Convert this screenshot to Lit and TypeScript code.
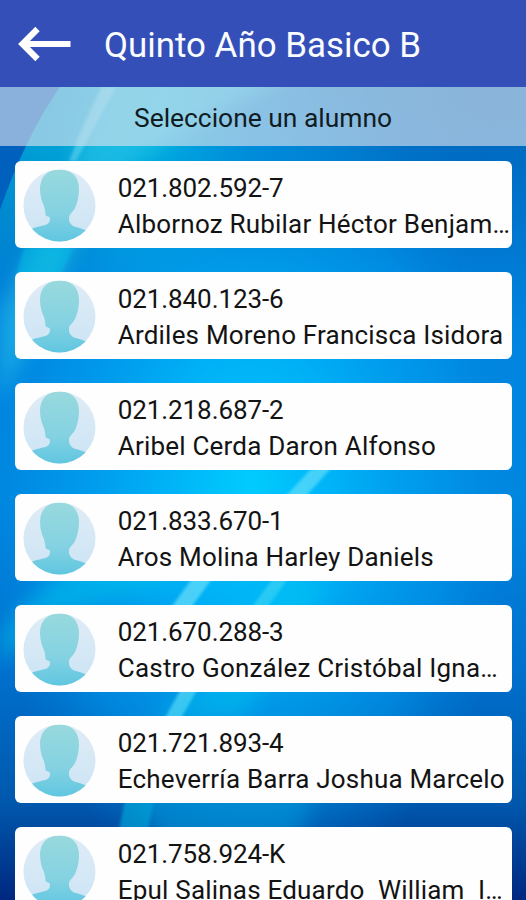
import { LitElement, html, css, svg } from "lit";
import { customElement, property } from "lit/decorators.js";

interface Student {
  id: string;
  name: string;
}

const STUDENTS: Student[] = [
  { id: "021.802.592-7", name: "Albornoz Rubilar Héctor Benjam…" },
  { id: "021.840.123-6", name: "Ardiles Moreno Francisca Isidora" },
  { id: "021.218.687-2", name: "Aribel Cerda Daron Alfonso" },
  { id: "021.833.670-1", name: "Aros Molina Harley Daniels" },
  { id: "021.670.288-3", name: "Castro González Cristóbal Igna…" },
  { id: "021.721.893-4", name: "Echeverría Barra Joshua Marcelo" },
  { id: "021.758.924-K", name: "Epul Salinas Eduardo  William  I…" },
];

@customElement("student-avatar")
export class StudentAvatar extends LitElement {
  static styles = css`
    :host { display: block; width: 73px; height: 73px; flex: none; }
    svg { display: block; width: 100%; height: 100%; }
  `;
  render() {
    return html`<svg viewBox="0 0 73 73" aria-hidden="true">
      <defs>
        <linearGradient id="back" x1="0" y1="0" x2="0" y2="1">
          <stop offset="0" stop-color="#e0ecf6" />
          <stop offset="1" stop-color="#cbe4f5" />
        </linearGradient>
        <linearGradient id="body" x1="0" y1="0" x2="0" y2="1">
          <stop offset="0" stop-color="#98d9dd" />
          <stop offset="0.6" stop-color="#84d2e2" />
          <stop offset="1" stop-color="#5fc6e0" />
        </linearGradient>
        <clipPath id="disc"><circle cx="36.5" cy="36.5" r="36" /></clipPath>
      </defs>
      <circle cx="36.5" cy="36.5" r="36" fill="url(#back)" />
      <path clip-path="url(#disc)" fill="url(#body)"
        d="M36.5 .5C49 .5 56 8 56 20C56 29 53.500 36 52 39C51 42 47 44 46 48C45.500 52 47 55 50 57C53 58.500 57 58.500 64 62V73H6V61C13 57.500 21 57 24.500 55C27 53.500 27.500 50 26.500 48C24.500 47.500 21.500 46.500 22.500 44.500C22 42 22 41 21 37C19 33 17 27 17 20C17 8 24 .5 36.500 .5Z" />
    </svg>`;
  }
}

@customElement("student-card")
export class StudentCard extends LitElement {
  @property({ attribute: false }) student!: Student;
  static styles = css`
    :host {
      display: flex;
      box-sizing: border-box;
      height: 87.4px;
      padding: 8.2px 0 0 7.8px;
      gap: 22px;
      background: #fefefe;
      border-radius: 6px;
      color: #131313;
      overflow: hidden;
    }
    .info { flex: 1; min-width: 0; padding-top: 1px; font-size: 26px; line-height: 36px; }
    .id, .name { white-space: pre; }
    .id { letter-spacing: -0.1px; }
    .name { letter-spacing: 0.2px; }
  `;
  render() {
    return html`<student-avatar></student-avatar>
      <div class="info">
        <div class="id">${this.student.id}</div>
        <div class="name">${this.student.name}</div>
      </div>`;
  }
}

const wallpaper = svg`
  <defs>
    <linearGradient id="base" x1="0" y1="87" x2="0" y2="900" gradientUnits="userSpaceOnUse">
      <stop offset="0" stop-color="#0067b8" />
      <stop offset="0.09" stop-color="#006cc4" />
      <stop offset="0.3" stop-color="#0084df" />
      <stop offset="0.5" stop-color="#0087e0" />
      <stop offset="0.72" stop-color="#0070cd" />
      <stop offset="0.88" stop-color="#0058ad" />
      <stop offset="1" stop-color="#002880" />
    </linearGradient>
    <radialGradient id="glow" cx="0" cy="0" r="1" gradientUnits="userSpaceOnUse" gradientTransform="translate(250 485) scale(270 410)">
      <stop offset="0" stop-color="#00ccff" />
      <stop offset="0.35" stop-color="#00b4f8" stop-opacity="0.9" />
      <stop offset="0.75" stop-color="#009bed" stop-opacity="0.55" />
      <stop offset="1" stop-color="#0088dd" stop-opacity="0" />
    </radialGradient>
    <linearGradient id="sweep" x1="20" y1="100" x2="480" y2="190" gradientUnits="userSpaceOnUse">
      <stop offset="0" stop-color="#009bd3" />
      <stop offset="0.3" stop-color="#00addf" />
      <stop offset="0.5" stop-color="#0090dc" stop-opacity="0.85" />
      <stop offset="1" stop-color="#0078cb" stop-opacity="0" />
    </linearGradient>
    <linearGradient id="fade" x1="0" y1="150" x2="0" y2="300" gradientUnits="userSpaceOnUse">
      <stop offset="0" stop-color="#fff" />
      <stop offset="1" stop-color="#000" />
    </linearGradient>
    <mask id="fadeMask"><rect width="526" height="900" fill="url(#fade)" /></mask>
    <clipPath id="rightOfCurve"><path d="M60 87Q26 135 0 210V900H526V87Z" /></clipPath>
    <filter id="soft" x="-20%" y="-20%" width="140%" height="140%"><feGaussianBlur stdDeviation="10" /></filter>
    <filter id="edge" x="-20%" y="-20%" width="140%" height="140%"><feGaussianBlur stdDeviation="1.500" /></filter>
  </defs>
  <rect width="526" height="900" fill="url(#base)" />
  <rect width="526" height="900" fill="url(#glow)" />
  <path d="M0 87H60Q26 135 0 210Z" fill="#0060be" />
  <path mask="url(#fadeMask)" d="M60 87Q26 135 0 210V420H526V87Z" fill="url(#sweep)" />
  <g clip-path="url(#rightOfCurve)">
    <path d="M0 310L60 200L110 60H320L150 150L85 215L58 290L0 400Z" fill="#30cdea" opacity="0.5" filter="url(#soft)" />
  </g>
  <path d="M24 248H73L60 276H16Z" fill="#00c4e6" opacity="0.45" filter="url(#edge)" />
  <path d="M102 87Q85 120 69 161H76L116 87Z" fill="#8be6f4" opacity="0.4" filter="url(#edge)" />
  <path d="M0 635Q45 570 130 540L230 490L160 590Q60 600 0 665Z" fill="#00c8ee" opacity="0.5" filter="url(#soft)" />
  <path d="M330 465L310 470L285 497H305L334 465Z" fill="#7ce7fb" opacity="0.55" filter="url(#edge)" />
  <path d="M194 576L170 609H190L214 576Z" fill="#7ce7fb" opacity="0.6" filter="url(#edge)" />
  <path d="M272 580L252 607L268 607L290 576Z" fill="#66dff4" opacity="0.5" filter="url(#edge)" />
  <path d="M182 687L164 720H180L199 687Z" fill="#7ce7fb" opacity="0.6" filter="url(#edge)" />
  <path d="M283 580L253 607L198 690L150 720H240L285 660L330 580Z" fill="#00ccf2" opacity="0.4" filter="url(#soft)" />
  <path d="M125 800L119 830H148L154 800Z" fill="#00b5df" opacity="0.55" filter="url(#edge)" />
  <ellipse cx="225" cy="800" rx="85" ry="60" fill="#009ad8" opacity="0.55" filter="url(#soft)" />
`;

@customElement("app-root")
export class AppRoot extends LitElement {
  static styles = css`
    :host {
      display: flex;
      flex-direction: column;
      position: relative;
      height: 900px;
      overflow: hidden;
      font-family: Roboto, "Noto Sans", sans-serif;
      background: #0072cc;
    }
    .wallpaper { position: absolute; inset: 0; width: 100%; height: 100%; }
    header, .prompt, main { position: relative; flex: none; }
    header {
      box-sizing: border-box;
      height: 87px;
      padding: 1px 0 0 18px;
      display: flex;
      align-items: center;
      gap: 33px;
      background: #3450b8;
      color: #fafcff;
    }
    .back { display: block; width: 53px; height: 36px; flex: none; }
    h1 { margin: 0; padding-top: 3px; font-size: 34.9px; font-weight: 400; line-height: 44px; white-space: nowrap; }
    .prompt {
      height: 59px;
      line-height: 62px;
      text-align: center;
      font-size: 26.4px;
      color: #101c22;
      background: rgba(222, 228, 238, 0.62);
    }
    main { display: flex; flex-direction: column; gap: 23.7px; padding: 14.7px 14.500px 0 15px; }
  `;
  render() {
    return html`
      <svg class="wallpaper" viewBox="0 0 526 900" preserveAspectRatio="none" aria-hidden="true">${wallpaper}</svg>
      <header>
        <svg class="back" viewBox="0 0 53 36" fill="none" stroke="#fff" stroke-width="6.200" aria-label="Volver">
          <path d="M52.500 18H5M19.500 3L4.500 18L19.500 33" />
        </svg>
        <h1>Quinto Año Basico B</h1>
      </header>
      <div class="prompt">Seleccione un alumno</div>
      <main>${STUDENTS.map((s) => html`<student-card .student=${s}></student-card>`)}</main>
    `;
  }
}
